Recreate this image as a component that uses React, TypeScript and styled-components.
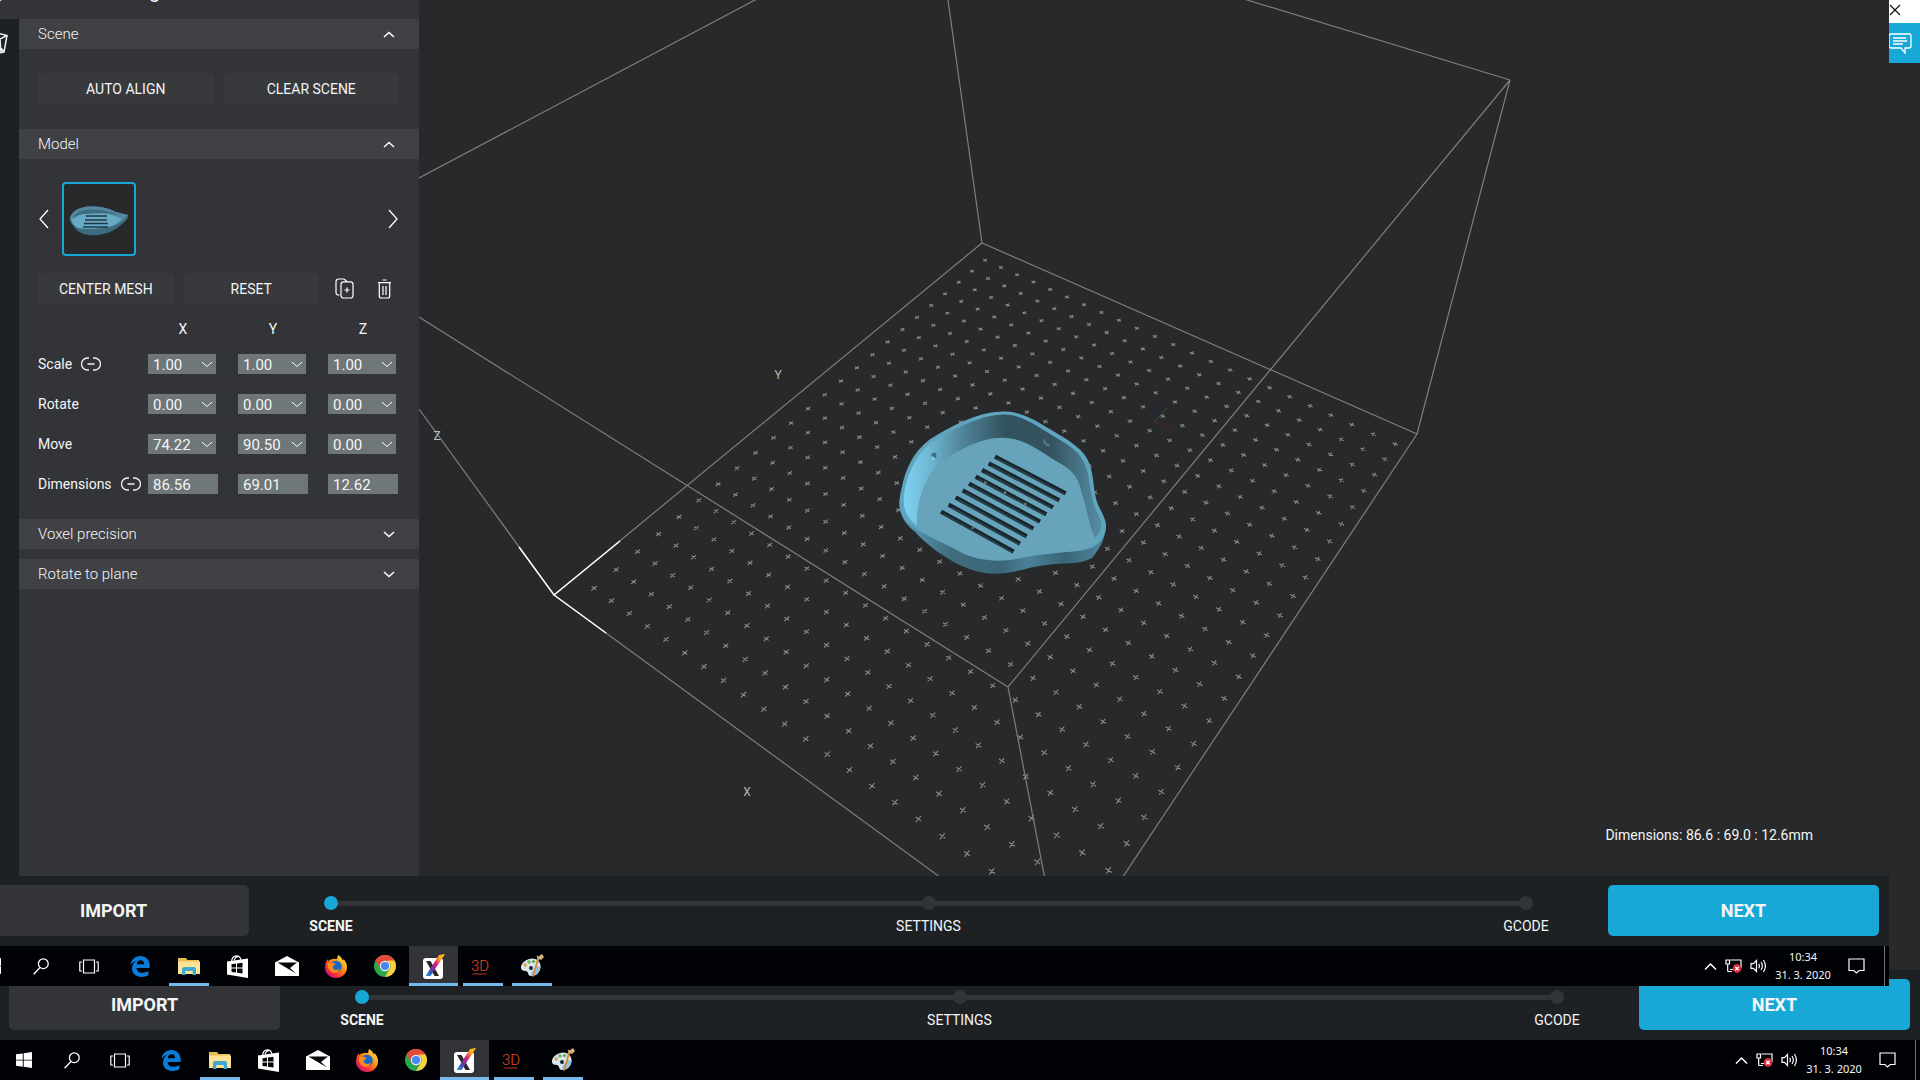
import React, { useId } from 'react';
import styled, { createGlobalStyle } from 'styled-components';

const color = {
  accent: '#17a8d8',
  bar: '#1e2124',
  panel: '#323438',
  header: '#404145',
  control: '#37393d',
  field: '#6f7678',
  view: '#28292b',
  taskbar: '#010206',
  text: '#f4f5f6',
};

const Global = createGlobalStyle`
  *, *::before, *::after { box-sizing: border-box; }
  body { margin: 0; background: ${color.view}; color: ${color.text}; font-family: Roboto, "Noto Sans", sans-serif; font-size: 15px; }
  button, input { font: inherit; color: inherit; margin: 0; padding: 0; border: 0; background: none; }
  button { cursor: pointer; }
  svg { display: block; }
  h1, h2, ol, p, fieldset { margin: 0; padding: 0; border: 0; font-weight: 400; }
`;

/* ---------- desktop and windows ---------- */

const Desktop = styled.div`
  display: grid;
  height: 100vh;
  overflow: hidden;
`;

const Screen = styled.div`
  display: flex;
  flex-direction: column;
  height: 100vh;
  min-width: 0;
`;

const BackScreen = styled(Screen)`
  grid-area: 1 / 1;
`;

const FrontWindow = styled.div`
  grid-area: 1 / 1;
  z-index: 1;
  height: calc(100vh - 94px);
  margin-right: 31px;
  overflow: hidden;
`;

const FrontScreen = styled(Screen)`
  width: calc(100% + 31px);
  margin: -94px 0 0 -31px;
`;

const TitleBar = styled.div`
  display: flex;
  flex: none;
  justify-content: flex-end;
  align-items: center;
  height: 23px;
  padding: 0 19px 4px;
  background: #fff;
`;

const Body = styled.div`
  display: flex;
  flex: 1;
  min-height: 0;
  background: ${color.view};
`;

const BackBody = styled(Body)`
  justify-content: flex-end;
  align-items: flex-start;
`;

const ChatButton = styled.button`
  display: flex;
  align-items: center;
  justify-content: center;
  width: 40px;
  height: 40px;
  padding-top: 2px;
  background: ${color.accent};
`;

/* ---------- side panel ---------- */

const Side = styled.div`
  display: flex;
  flex-direction: column;
  flex: none;
  width: 450px;
  background: ${color.panel};
`;

const SideTop = styled.header`
  display: flex;
  flex: none;
  align-items: flex-end;
  gap: 140px;
  height: 90px;
  padding: 0 0 16px 16px;
`;

const Title = styled.h1`
  font-size: 20px;
  line-height: 24px;
`;

const SideMain = styled.div`
  display: flex;
  flex: 1;
`;

const Rail = styled.nav`
  flex: none;
  width: 50px;
  padding: 12px 11px;
  background: ${color.bar};
`;

const Panel = styled.div`
  flex: 1;
  min-width: 0;
`;

const SectionHead = styled.button`
  display: flex;
  align-items: center;
  justify-content: space-between;
  width: 100%;
  height: 30px;
  padding: 0 24px 0 19px;
  background: ${color.header};
  font-weight: 300;
  font-size: 15px;
  text-align: left;
`;

const SectionBody = styled.div<{ $pad: string }>`
  display: flex;
  flex-direction: column;
  padding: ${(p) => p.$pad};
`;

const ButtonRow = styled.div`
  display: flex;
  gap: 10px;
`;

const PanelButton = styled.button`
  flex: 1;
  height: 31px;
  border-radius: 4px;
  background: ${color.control};
  font-size: 14px;
`;

const IconButton = styled.button`
  display: flex;
  align-items: center;
  justify-content: center;
  width: 30px;
`;

const Carousel = styled.div`
  display: flex;
  align-items: center;
  gap: 13px;
  margin-bottom: 17px;
`;

const Thumb = styled.button`
  width: 74px;
  height: 74px;
  border: 2px solid ${color.accent};
  border-radius: 4px;
  background: ${color.view};
`;

const Spacer = styled.div`
  flex: 1;
`;

const Transform = styled.div`
  display: grid;
  grid-template-columns: 1fr 90px 90px 71px;
  grid-template-rows: 30px;
  grid-auto-rows: 40px;
  align-items: center;
  margin-top: 10px;
`;

const Axis = styled.span`
  width: 70px;
  font-size: 14px;
  text-align: center;
`;

const RowLabel = styled.div`
  display: flex;
  align-items: center;
  gap: 9px;
  font-size: 14px;
  white-space: nowrap;
`;

const Field = styled.div<{ $wide: boolean }>`
  display: flex;
  align-items: center;
  width: ${(p) => (p.$wide ? 70 : 68)}px;
  height: 20px;
  padding: 0 3px 0 5px;
  background: ${color.field};
`;

const FieldInput = styled.input`
  flex: 1;
  min-width: 0;
  height: 20px;
  padding-top: 2px;
  font-size: 15px;
`;

/* ---------- viewer ---------- */

const Viewer = styled.main`
  position: relative;
  flex: 1;
  min-width: 0;
  overflow: hidden;
`;

const Readout = styled.p`
  position: absolute;
  right: 76px;
  bottom: 31px;
  font-size: 14px;
  line-height: 20px;
`;

/* ---------- bottom bar ---------- */

const Bar = styled.footer`
  display: flex;
  flex: none;
  height: 70px;
  padding: 9px 10px 10px 9px;
  background: ${color.bar};
`;

const BarButton = styled.button<{ $primary?: boolean }>`
  width: 271px;
  border-radius: 5px;
  background: ${(p) => (p.$primary ? color.accent : color.panel)};
  font-size: 18px;
  font-weight: 700;
`;

const Steps = styled.ol`
  display: flex;
  flex: 1;
  justify-content: space-between;
  padding: 11px 32px 0;
  list-style: none;
  background: linear-gradient(${color.panel}, ${color.panel}) no-repeat center 16px / calc(100% - 164px) 5px;
`;

const Step = styled.li<{ $active: boolean }>`
  display: flex;
  flex-direction: column;
  align-items: center;
  gap: 6px;
  width: 100px;
  font-size: 14px;
  line-height: 20px;
  font-weight: ${(p) => (p.$active ? 700 : 400)};

  &::before {
    content: '';
    width: 14px;
    height: 14px;
    border-radius: 50%;
    background: ${(p) => (p.$active ? color.accent : color.panel)};
  }
`;

/* ---------- taskbar ---------- */

const Task = styled.div`
  display: flex;
  flex: none;
  height: 40px;
  background: ${color.taskbar};
`;

const Launchers = styled.div`
  display: flex;
  flex: 1;
  gap: 2px;
`;

const LauncherGroup = styled.div`
  display: flex;
`;

const Launcher = styled.button<{ $state?: 'open' | 'active' | 'system' }>`
  display: flex;
  align-items: center;
  justify-content: center;
  width: ${(p) => (p.$state === 'system' ? 48 : 49)}px;
  height: 40px;
  background: ${(p) =>
    p.$state === 'active'
      ? 'linear-gradient(#76b9ed, #76b9ed) no-repeat bottom / 100% 3px, #333437'
      : p.$state === 'open'
        ? 'linear-gradient(#76b9ed, #76b9ed) no-repeat bottom / 40px 3px'
        : 'none'};
`;

const Tray = styled.div`
  display: flex;
  align-items: center;
  gap: 8px;
  padding-right: 4px;
`;

const Clock = styled.time`
  width: 56px;
  font-family: "Noto Sans", sans-serif;
  font-size: 11px;
  line-height: 18px;
  text-align: center;
  white-space: nowrap;
`;

const NoticeButton = styled.button`
  padding: 0 11px 0 9px;
`;

const PeekLine = styled.span`
  width: 1px;
  height: 40px;
  background: #6d6e70;
`;

/* ---------- icons ---------- */

const Chevron = ({ d, w, h, sw = 1.5 }: { d: string; w: number; h: number; sw?: number }) => (
  <svg width={w} height={h} viewBox={`0 0 ${w} ${h}`} fill="none" stroke="#fff" strokeWidth={sw}>
    <path d={d} />
  </svg>
);

const LinkIcon = () => (
  <svg width="20" height="14" viewBox="0 0 20 14" fill="none" stroke="#f0f0f0" strokeWidth="1.3">
    <path d="M8 1H6.500A6 6 0 0 0 6.500 13H8M12 1h1.500A6 6 0 0 1 13.500 13H12M6.500 7h7" />
  </svg>
);

const CopyIcon = () => (
  <svg width="19" height="21" viewBox="0 0 19 21" fill="none" stroke="#fff" strokeWidth="1.2">
    <path d="M4.500 17H3.500A2.500 2.500 0 0 1 1 14.500V3.500A2.500 2.500 0 0 1 3.500 1H9l3 2.500" />
    <rect x="6" y="3.800" width="12" height="16.200" rx="2.500" />
    <path d="M12 9.500v5M9.500 12h5" />
  </svg>
);

const TrashIcon = () => (
  <svg width="15" height="20" viewBox="0 0 15 20" fill="none" stroke="#fff" strokeWidth="1.2">
    <path d="M5.500 1h4M1 3.700h13M2.300 3.700V17a2 2 0 0 0 2 2h6.400a2 2 0 0 0 2-2V3.700M6 7v9M9 7v9" />
  </svg>
);

const CubeIcon = () => (
  <svg width="28" height="24" viewBox="0 0 28 24" fill="none" stroke="#f0f0f0" strokeWidth="1.500">
    <path d="M1 5L13 1l14 3.500-3 16.500-11 2L3 21zM1 5l19 3 7-3.500M20 8l-2 5 6 8M20 8l1 14" />
  </svg>
);

const LogoIcon = () => (
  <svg width="24" height="28" viewBox="0 0 24 28" fill="none" stroke="#f0f0f0" strokeWidth="1.800">
    <path d="M12 1l11 6v13l-11 7-11-7V7z" />
  </svg>
);

const ChatIcon = () => (
  <svg width="24" height="22" viewBox="0 0 24 22" fill="none" stroke="#fff" strokeWidth="1.300">
    <path d="M3 1h18a2 2 0 0 1 2 2v10a2 2 0 0 1-2 2h-4v5l-4-5H3a2 2 0 0 1-2-2V3a2 2 0 0 1 2-2zM5 5h13M5 8h14M5 11h10" />
  </svg>
);

const WindowsIcon = () => (
  <svg width="16" height="16" viewBox="0 0 16 16" fill="#fff">
    <path d="M0 2.300L6.800 1.400V7.700H0zM7.700 1.200L16 0v7.700H7.700zM0 8.500h6.800v6.200L0 13.800zM7.700 8.500H16V16l-8.300-1.200z" />
  </svg>
);

const SearchIcon = () => (
  <svg width="16" height="17" viewBox="0 0 16 17" fill="none" stroke="#fff" strokeWidth="1.300">
    <circle cx="10.300" cy="5.700" r="4.900" />
    <path d="M7 9.500L.6 16.300" />
  </svg>
);

const TaskViewIcon = () => (
  <svg width="20" height="15" viewBox="0 0 20 15" fill="none" stroke="#fff" strokeWidth="1.200">
    <path d="M4.500 1h11v13h-11zM3 3H.8v9H3M17 3h2.200v9H17" />
  </svg>
);

const EdgeIcon = () => (
  <svg width="20" height="21" viewBox="0 0 20 21" fill="#0a7bd8">
    <path d="M.3 9.300C1 4 4.800 0 10.300 0 16 0 19.700 4 19.700 9.500v2.400H6.600c.1 3.400 2.600 4.800 5.800 4.800 2.300 0 4.300-.6 6-1.700v4.300c-1.900 1.100-4.400 1.700-7 1.700C5.700 21 2 17.600 2 12.600c0-3.700 2-6.700 5.200-8C4 5.200 1.600 6.800.3 9.300zM6.800 8.200h7.300c0-2.500-1.200-4-3.500-4-2.100 0-3.500 1.600-3.800 4z" />
  </svg>
);

const FolderIcon = () => (
  <svg width="22" height="18" viewBox="0 0 22 18">
    <path d="M0 1h8l1.500 2H21v14H0z" fill="#e9bd55" />
    <path d="M0 4.500h22V17H0z" fill="#fbe294" />
    <path d="M4 18v-6.500l1.500-1.500h11l1.500 1.500V18h-3.500v-4h-7v4z" fill="#3ea8d1" />
    <path d="M7.500 14h7v3h-7z" fill="#fbe294" />
  </svg>
);

const StoreIcon = () => (
  <svg width="21" height="23" viewBox="0 0 21 23">
    <path d="M4.500 6.500C5 2 7.500.8 9.500.8c2.200 0 4 1.200 4.400 4.200M7 5.500C8 2.500 9.500 1.600 11 1.800" fill="none" stroke="#fff" strokeWidth="1.200" />
    <path d="M0 6.500L21 3.500V23L0 19.500z" fill="#fff" />
    <path d="M4.500 9.200l4.500-.6v4H4.500zM10 8.500l5.500-.8v4.900H10zM4.500 13.600H9v4l-4.500-.6zM10 13.600h5.500v4.900L10 17.700z" fill="#05060a" />
  </svg>
);

const MailIcon = () => (
  <svg width="24" height="20" viewBox="0 0 24 20">
    <path d="M0 6.500L12 0l12 6.500V20H0z" fill="#fff" />
    <path d="M2.500 6.500h19.500L15 12l6 5.500L10 11z" fill="#05060a" />
  </svg>
);

const FirefoxIcon = ({ id }: { id: string }) => (
  <svg width="22" height="23" viewBox="0 0 22 23">
    <defs>
      <linearGradient id={`${id}ff`} x1=".9" y1=".1" x2=".2" y2=".9">
        <stop offset="0" stopColor="#ffe23c" />
        <stop offset=".45" stopColor="#ff8a16" />
        <stop offset=".8" stopColor="#f5303d" />
        <stop offset="1" stopColor="#d9107a" />
      </linearGradient>
    </defs>
    <path d="M13 0c3 1.500 4 3.500 4.500 5l1.500-.5c2 2.500 3 5 3 8C22 18.500 17 23 11 23S0 18.500 0 12.500c0-3 1-6 3-8.500v2.500C4 5 5 4.500 6.500 4.500 8 3 10 4 12 4c.5-1.500.500-3 1-4z" fill={`url(#${id}ff)`} />
    <circle cx="11" cy="11.500" r="5.800" fill="#1767c7" />
    <path d="M3 8.500C5 7 8 8 10 8.500c1 1-1.500 2.300-2.500 3C7.500 15 12 16 15 13.500 14 18 8 19.500 5 16 3 14 2.500 11 3 8.500z" fill="#ff8a16" />
  </svg>
);

const ChromeIcon = () => (
  <svg width="22" height="22" viewBox="0 0 22 22">
    <circle cx="11" cy="11" r="11" fill="#2aa650" />
    <path d="M11 11L1.500 5.500A11 11 0 0 1 20.500 5.500z" fill="#e24a3b" />
    <path d="M1.500 5.500A11 11 0 0 1 20.500 5.500H11A5.500 5.500 0 0 0 6.200 13.700z" fill="#e24a3b" />
    <path d="M20.500 5.500A11 11 0 0 1 11 22l4.800-8.300A5.500 5.500 0 0 0 15.500 7.800L13 5.500z" fill="#fbd03d" />
    <circle cx="11" cy="11" r="5.200" fill="#f2f2f2" />
    <circle cx="11" cy="11" r="4.100" fill="#4688f1" />
  </svg>
);

const VoxelIcon = ({ id }: { id: string }) => (
  <svg width="22" height="25" viewBox="0 0 22 25">
    <defs>
      <linearGradient id={`${id}vx`} x1="1" y1="0" x2="0" y2="1">
        <stop offset="0" stopColor="#ffd21c" />
        <stop offset=".25" stopColor="#f9a01b" />
        <stop offset=".45" stopColor="#d8227c" />
        <stop offset=".7" stopColor="#5b3aa6" />
        <stop offset="1" stopColor="#17a8e8" />
      </linearGradient>
    </defs>
    <rect y="4" width="20" height="21" rx="3" fill="#fff" />
    <path d="M3 7h4.500L16 22h-4.500z" fill="#2b2628" />
    <path d="M2.500 22L16 1l6-1L7.500 22z" fill={`url(#${id}vx)`} />
  </svg>
);

const ThreeDIcon = () => (
  <svg width="26" height="20" viewBox="0 0 26 20">
    <text x="10" y="15" textAnchor="middle" fontFamily="Roboto, sans-serif" fontWeight="300" fontSize="15" fill="#e8481f">
      3D
    </text>
    <path d="M2.500 18h14" stroke="#c23c1c" />
  </svg>
);

const PaintIcon = () => (
  <svg width="24" height="24" viewBox="0 0 24 24">
    <path d="M9 5C14 3 20 6 20.500 11.500 21 17 17 22 11.500 22c-3.500 0-3-2.500-4-4S3 17.500 1.500 15.500C-.5 12 3 7 9 5z" fill="#d7e7f2" />
    <path d="M11 22c5 0 9-4.500 9.500-9l-4-1-5 6z" fill="#8fc3e2" />
    <circle cx="5.200" cy="11" r="1.700" fill="#d9a13d" />
    <circle cx="9" cy="8" r="1.700" fill="#6fb04c" />
    <circle cx="13.500" cy="7.500" r="1.600" fill="#5ba65c" />
    <circle cx="11" cy="14" r="1.900" fill="#101820" />
    <path d="M19.500 4L14 22l-1.500 1.500V21l5-17.500z" fill="#d98a35" />
    <path d="M16.500 1l2 1.500L22 0l2 3-3 3-3.500-1.500z" fill="#d7b27a" />
  </svg>
);

const NetworkIcon = () => (
  <svg width="17" height="14" viewBox="0 0 17 14" fill="none" stroke="#fff" strokeWidth="1.200">
    <path d="M5.500 1H16v8M1 1h3.500v4H1zM2.700 5v7.500M5 10.500h3M2.700 12.500H7" />
    <circle cx="12" cy="9.500" r="4.400" fill="#dc2a3a" stroke="none" />
    <path d="M10.300 7.800l3.400 3.400M13.700 7.800l-3.400 3.400" strokeWidth="1.400" />
  </svg>
);

const VolumeIcon = () => (
  <svg width="17" height="14" viewBox="0 0 17 14" fill="none" stroke="#fff" strokeWidth="1.200">
    <path d="M1 4.700h2.500L6.500 1.500v11L3.500 9.300H1zM8.700 4.800q1.400 2.200 0 4.400M11 3q2.700 4 0 8M13.400 1q4 6 0 12" />
  </svg>
);

const NoticeIcon = () => (
  <svg width="17" height="16" viewBox="0 0 17 16" fill="none" stroke="#fff" strokeWidth="1.200">
    <path d="M1 1h15v11.500h-4.800L8.500 15l-2.700-2.500H1z" />
  </svg>
);

/* ---------- shared bars ---------- */

const BottomBar = () => (
  <Bar>
    <BarButton>IMPORT</BarButton>
    <Steps>
      <Step $active>SCENE</Step>
      <Step $active={false}>SETTINGS</Step>
      <Step $active={false}>GCODE</Step>
    </Steps>
    <BarButton $primary>NEXT</BarButton>
  </Bar>
);

const Taskbar = () => {
  const id = useId();
  return (
    <Task>
      <Launchers>
        <LauncherGroup>
          <Launcher aria-label="Start" $state="system"><WindowsIcon /></Launcher>
          <Launcher aria-label="Search" $state="system"><SearchIcon /></Launcher>
          <Launcher aria-label="Task view" $state="system"><TaskViewIcon /></Launcher>
        </LauncherGroup>
        <LauncherGroup>
          <Launcher aria-label="Edge"><EdgeIcon /></Launcher>
          <Launcher aria-label="Explorer" $state="open"><FolderIcon /></Launcher>
          <Launcher aria-label="Store"><StoreIcon /></Launcher>
          <Launcher aria-label="Mail"><MailIcon /></Launcher>
          <Launcher aria-label="Firefox"><FirefoxIcon id={id} /></Launcher>
          <Launcher aria-label="Chrome"><ChromeIcon /></Launcher>
          <Launcher aria-label="Voxelizer" $state="active"><VoxelIcon id={id} /></Launcher>
          <Launcher aria-label="3D tool" $state="open"><ThreeDIcon /></Launcher>
          <Launcher aria-label="Paint" $state="open"><PaintIcon /></Launcher>
        </LauncherGroup>
      </Launchers>
      <Tray>
        <Chevron d="M1 7.500L6.500 2L12 7.500" w={13} h={9} />
        <NetworkIcon />
        <VolumeIcon />
        <Clock>
          10:34
          <br />
          31. 3. 2020
        </Clock>
        <NoticeButton aria-label="Notifications"><NoticeIcon /></NoticeButton>
        <PeekLine />
      </Tray>
    </Task>
  );
};

/* ---------- 3D scene ---------- */

type Pt = [number, number];

const COLS = 22;
const ROWS = 23;
/* Screen positions of the four outermost bed marks. */
const CORNERS: Pt[] = [[594, 588.3], [1070.4, 927.2], [1395.2, 444], [985, 260.3]];

/* Projective map from the unit square onto the corners. */
const project = (() => {
  const [[x0, y0], [x1, y1], [x2, y2], [x3, y3]] = CORNERS;
  const dx1 = x1 - x2, dx2 = x3 - x2, dx3 = x0 - x1 + x2 - x3;
  const dy1 = y1 - y2, dy2 = y3 - y2, dy3 = y0 - y1 + y2 - y3;
  const det = dx1 * dy2 - dx2 * dy1;
  const g = (dx3 * dy2 - dx2 * dy3) / det;
  const h = (dx1 * dy3 - dx3 * dy1) / det;
  const a = x1 - x0 + g * x1, b = x3 - x0 + h * x3;
  const d = y1 - y0 + g * y1, e = y3 - y0 + h * y3;
  return (i: number, j: number): Pt => {
    const u = i / COLS, v = j / ROWS, w = g * u + h * v + 1;
    return [(a * u + b * v + x0) / w, (d * u + e * v + y0) / w];
  };
})();

const marks = (() => {
  const arm = 0.12;
  const seg = (p: Pt, q: Pt) => `M${p[0].toFixed(1)} ${p[1].toFixed(1)}L${q[0].toFixed(1)} ${q[1].toFixed(1)}`;
  let path = '';
  for (let i = 0; i <= COLS; i += 1) {
    for (let j = 0; j <= ROWS; j += 1) {
      path += seg(project(i - arm, j), project(i + arm, j));
      path += seg(project(i, j - arm), project(i, j + arm));
    }
  }
  return path;
})();

const SLOTS: [number, number, number, number][] = [
  [405, 230, 617, 340], [386, 250, 598, 361], [366, 270, 579, 382],
  [347, 290, 559, 403], [327, 311, 540, 425], [308, 331, 520, 446],
  [287, 352, 500, 469], [266, 374, 480, 491], [243, 395, 461, 515],
];

const Scene = () => {
  const id = useId();
  return (
    <svg width="100%" height="100%" viewBox="419 -71 1470 947" preserveAspectRatio="xMinYMin slice">
      <defs>
        <linearGradient id={`${id}w`} x1="130" y1="0" x2="720" y2="0" gradientUnits="userSpaceOnUse">
          <stop offset="0" stopColor="#7fd2f2" />
          <stop offset=".13" stopColor="#6fb8d3" />
          <stop offset=".3" stopColor="#4f8499" />
          <stop offset=".52" stopColor="#33525f" />
          <stop offset=".75" stopColor="#34535f" />
          <stop offset=".92" stopColor="#4b7b8f" />
          <stop offset="1" stopColor="#568da4" />
        </linearGradient>
        <linearGradient id={`${id}o`} x1="120" y1="0" x2="740" y2="0" gradientUnits="userSpaceOnUse">
          <stop offset="0" stopColor="#5b9fb9" />
          <stop offset=".25" stopColor="#3f6c7e" />
          <stop offset=".5" stopColor="#3c6677" />
          <stop offset=".62" stopColor="#4b8199" />
          <stop offset=".8" stopColor="#3b6575" />
          <stop offset="1" stopColor="#4f88a0" />
        </linearGradient>
      </defs>
      <path d={marks} stroke="#8b8c8d" strokeWidth="1.100" fill="none" />
      <g stroke="#7d7e7f" strokeWidth="1.200" fill="none">
        <path d="M554 595L982 243L1417 434L1063 967zM982 243L938 -71M1417 434L1510 80L1008 687L1058 947M1008 687L688 486L419 317M419 178L889 -71M1510 80L1014 -71M554 595L419 409" />
      </g>
      <path d="M519 547L554 595L620 541M554 595L606 633" stroke="#fff" strokeWidth="1.500" fill="none" />
      <path d="M1154 422V406" stroke="#1f2560" />
      <path d="M1154 422L1167 408" stroke="#2a5c2c" />
      <path d="M1154 422L1173 431" stroke="#5a2226" />
      <g fill="#b9babb" fontFamily="Roboto, sans-serif" fontSize="12" textAnchor="middle">
        <text x="747" y="796">X</text>
        <text x="778" y="379">Y</text>
        <text x="437" y="440">Z</text>
      </g>
      <g transform="translate(860 380) scale(.33333)">
        <path d="M118 360C116 400 132 430 165 455C210 505 300 570 380 580C450 588 500 560 560 555C610 548 660 555 695 535C725 500 738 470 738 430L600 300L200 300z" fill={`url(#${id}o)`} />
        <path d="M420 95C470 92 510 110 560 142C610 172 645 190 672 222C702 262 696 300 706 346C712 385 738 405 738 440C735 480 710 505 660 512C590 520 540 520 480 535C420 548 350 545 290 510C230 480 180 460 145 430C115 400 115 360 125 325C135 270 160 215 210 178C270 140 350 97 420 95z" fill="#5fa5c0" />
        <path d="M420 104C466 100 505 120 550 150C600 180 640 200 662 230C690 270 685 305 696 350C703 390 722 405 724 436C724 450 715 466 705 474L400 400L170 437C130 405 127 370 134 330C146 275 170 222 216 187C275 150 355 107 420 104z" fill={`url(#${id}w)`} />
        <path d="M440 174C500 178 540 215 600 250C660 285 655 310 672 360C685 400 685 435 706 474C716 485 700 502 655 510C590 520 540 520 480 533C420 546 350 543 290 508C240 485 210 465 172 440C165 380 190 300 230 258C290 210 370 168 440 174z" fill="#67a3bb" />
        <path d="M215 222q8-8 14 0v12l-14 4z" fill="#3f6c7e" />
        <path d="M212 232q8-6 14 4l-8 6z" fill="#86c8e2" />
        <path d="M552 178q2 18 18 18" stroke="#557f91" strokeWidth="6" fill="none" />
        {SLOTS.map(([x1, y1, x2, y2]) => (
          <g key={y1}>
            <path d={`M${x1} ${y1}L${x2} ${y2}`} stroke="#18262c" strokeWidth="13" />
            <path d={`M${x1 + 8} ${y1 + 7}L${x2 - 4} ${y2 + 2}`} stroke="#2c454f" strokeWidth="4" />
          </g>
        ))}
        <g fill="#74808a">
          <circle cx="376" cy="308" r="4" />
          <circle cx="435" cy="338" r="4" />
          <circle cx="496" cy="372" r="4" />
          <circle cx="338" cy="444" r="3" />
        </g>
      </g>
    </svg>
  );
};

const ThumbDrawing = () => (
  <svg width="70" height="70" viewBox="0 0 70 70">
    <path d="M6 34C8 27 14 24 23 22.500C36 22 45 24 52 28L64 31C64 35 62 37 57 41C50 47 42 50 34 51C24 52 16 50 12 45C9 42 6 38 6 34z" fill="#3c6c80" />
    <path d="M6 34C8 27 14 24 23 22.500C36 22 45 24 52 28L64 31C60 36 52 43 40 44C30 45 18 45 14 44C10 42 6 38 6 34z" fill="#548aa0" />
    <path d="M9 34C11 29 17 26 25 25.500C38 25 46 28 61 32C54 30 48 30 40 29C28 29 18 31 13 41z" fill="#3e6d80" />
    <path d="M8 35L15 31C25 29 42 29 48 31L58 35C52 41 46 43 38 44C30 45 18 45 14 44C10 42 8 38 8 35z" fill="#66aac6" />
    <path d="M22 32h21M21 36h22M20 39.500h24M19 43h25" stroke="#20363f" strokeWidth="1.300" />
  </svg>
);

/* ---------- side panel content ---------- */

const UP = 'M1 6L6 1.500L11 6';
const DOWN = 'M1 1L6 5.500L11 1';

const ROW_DATA = [
  { name: 'Scale', link: true, wide: false, values: ['1.00', '1.00', '1.00'] },
  { name: 'Rotate', link: false, wide: false, values: ['0.00', '0.00', '0.00'] },
  { name: 'Move', link: false, wide: false, values: ['74.22', '90.50', '0.00'] },
  { name: 'Dimensions', link: true, wide: true, values: ['86.56', '69.01', '12.62'] },
];

const AXES = ['X', 'Y', 'Z'];

const SidePanel = () => (
  <Side>
    <SideTop>
      <LogoIcon />
      <Title>g</Title>
    </SideTop>
    <SideMain>
      <Rail>
        <CubeIcon />
      </Rail>
      <Panel>
        <SectionHead>Scene<Chevron d={UP} w={12} h={7} /></SectionHead>
        <SectionBody $pad="24px 20px 25px 19px">
          <ButtonRow>
            <PanelButton>AUTO ALIGN</PanelButton>
            <PanelButton>CLEAR SCENE</PanelButton>
          </ButtonRow>
        </SectionBody>
        <SectionHead>Model<Chevron d={UP} w={12} h={7} /></SectionHead>
        <SectionBody $pad="23px 20px 15px 19px">
          <Carousel>
            <button aria-label="Previous"><Chevron d="M10 1L2 10L10 19" w={11} h={20} sw={1.3} /></button>
            <Thumb aria-label="Selected model"><ThumbDrawing /></Thumb>
            <Spacer />
            <button aria-label="Next model"><Chevron d="M1 1L9 10L1 19" w={11} h={20} sw={1.3} /></button>
          </Carousel>
          <ButtonRow>
            <PanelButton>CENTER MESH</PanelButton>
            <PanelButton>RESET</PanelButton>
            <IconButton aria-label="Duplicate"><CopyIcon /></IconButton>
            <IconButton aria-label="Delete"><TrashIcon /></IconButton>
          </ButtonRow>
          <Transform>
            <span />
            {AXES.map((axis) => <Axis key={axis}>{axis}</Axis>)}
            {ROW_DATA.map((row) => (
              <React.Fragment key={row.name}>
                <RowLabel>{row.name}{row.link && <LinkIcon />}</RowLabel>
                {row.values.map((value, i) => (
                  <Field key={AXES[i]} $wide={row.wide}>
                    <FieldInput aria-label={`${row.name} ${AXES[i]}`} defaultValue={value} />
                    {!row.wide && <Chevron d={DOWN} w={12} h={7} sw={1} />}
                  </Field>
                ))}
              </React.Fragment>
            ))}
          </Transform>
        </SectionBody>
        <SectionHead>Voxel precision<Chevron d={DOWN} w={12} h={7} /></SectionHead>
        <SectionBody $pad="10px 0 0">
          <SectionHead>Rotate to plane<Chevron d={DOWN} w={12} h={7} /></SectionHead>
        </SectionBody>
      </Panel>
    </SideMain>
  </Side>
);

export default function App() {
  return (
    <>
      <Global />
      <Desktop>
        <BackScreen>
          <TitleBar>
            <svg width="12" height="12" viewBox="0 0 12 12" stroke="#111" strokeWidth="1.200">
              <path d="M1 1l10 10M11 1L1 11" />
            </svg>
          </TitleBar>
          <BackBody>
            <ChatButton aria-label="Chat"><ChatIcon /></ChatButton>
          </BackBody>
          <BottomBar />
          <Taskbar />
        </BackScreen>
        <FrontWindow>
          <FrontScreen>
            <TitleBar />
            <Body>
              <SidePanel />
              <Viewer>
                <Scene />
                <Readout>Dimensions: 86.6 : 69.0 : 12.6mm</Readout>
              </Viewer>
            </Body>
            <BottomBar />
            <Taskbar />
          </FrontScreen>
        </FrontWindow>
      </Desktop>
    </>
  );
}
